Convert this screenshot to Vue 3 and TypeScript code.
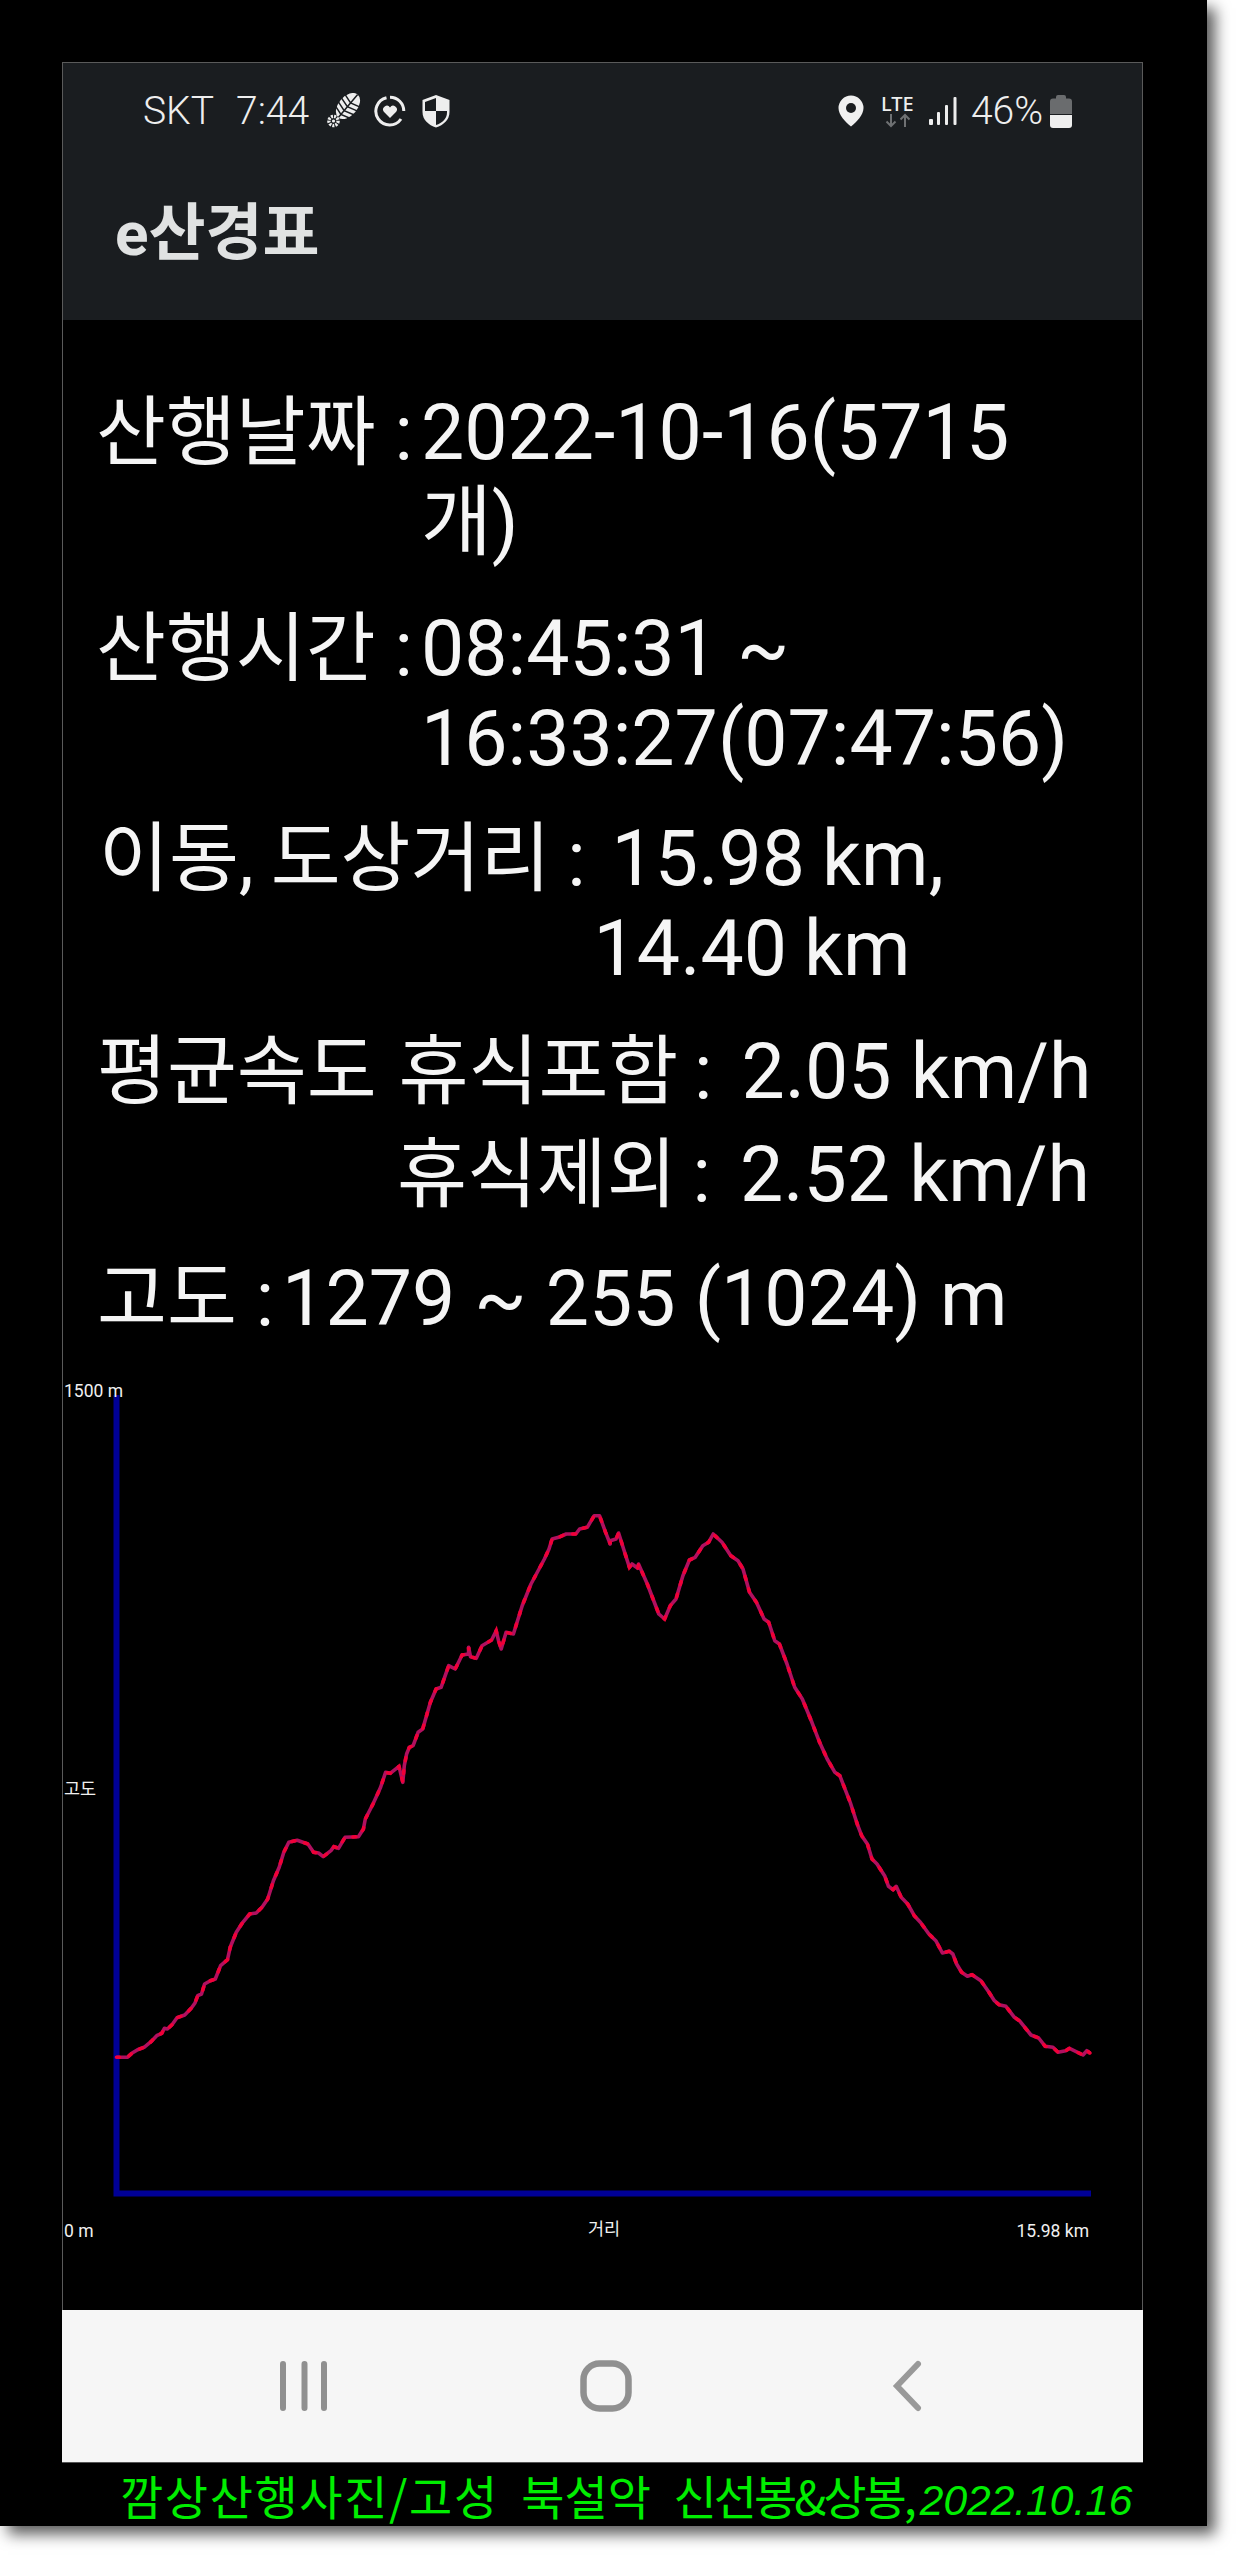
<script setup lang="ts">
type P = [number, number];
// readings in crop coordinates, converted to page coordinates
const conv = (pts: P[], ox: number, oy: number, sx: number): string =>
  pts.map(([x, y]) => `${(ox + x / sx).toFixed(1)},${(oy + y / 3).toFixed(1)}`).join(" ");

const a: P[] = [[200,775],[228,775],[240,763],[255,752],[272,745],[290,728],[305,710],[318,703],[325,688],[333,690],[345,677],[358,656],[378,648],[395,628],[405,612],[412,590],[422,585],[430,555],[445,545],[458,540],[472,500],[490,482],[497,445],[513,400],[530,370],[548,345],[565,342],[580,325],[595,300],[610,245],[625,205],[637,160],[650,130],[672,124],[700,135],[715,160],[728,162],[740,173],[760,155],[768,143],[780,148],[797,115],[832,113],[845,90]];
const b: P[] = [[850,1380],[870,1335],[890,1285],[903,1240],[915,1243],[938,1222],[948,1270],[952,1220],[958,1185],[965,1165],[975,1160],[988,1120],[1000,1110],[1020,1030],[1035,990],[1048,985],[1068,920],[1085,930],[1103,888],[1120,885],[1120,865],[1125,893],[1140,898],[1155,860],[1180,843],[1192,815],[1198,845],[1205,870],[1218,820],[1237,825],[1260,740],[1283,675],[1318,600],[1330,570],[1338,540],[1355,535],[1375,525],[1400,525],[1410,510],[1430,505],[1448,470],[1462,470],[1478,520],[1490,555],[1490,545],[1505,540],[1512,522],[1525,570],[1540,625]];
const c: P[] = [[345,255],[360,268],[362,255],[385,315],[415,405],[430,420],[445,380],[460,360],[478,290],[495,243],[510,235],[530,200],[545,190],[557,165],[580,190],[603,230],[622,245],[635,270],[652,340],[670,370],[690,420],[702,430],[718,485],[730,495],[750,555],[770,625],[790,660],[815,730],[835,790],[855,840],[875,880],[888,890],[915,970],[935,1040],[945,1070],[960,1095],[972,1140],[985,1155],[1005,1190]];
const d: P[] = [[645,262],[657,272],[665,262],[678,295],[695,315],[712,350],[728,370],[750,405],[768,425],[785,462],[803,457],[812,465],[822,495],[835,520],[850,532],[862,527],[885,545],[905,578],[920,605],[932,617],[950,622],[972,655],[985,665],[1015,708],[1035,717],[1052,742],[1072,745],[1085,760],[1105,755],[1115,748],[1150,768],[1160,755],[1168,762]];

const profile = [
  conv(a, 40, 1800, 2.613),
  conv(b, 40, 1360, 2.613),
  conv(c, 500, 1480, 2.613),
  conv(d, 640, 1800, 2.596),
].join(" ");
</script>

<template>
  <div class="page">
    <div class="frame">
      <div class="phone">
        <div class="screen">
          <header class="appbar">
            <div class="status">
              <span class="st-text skt">SKT</span>
              <span class="st-text clock">7:44</span>
              <svg class="ic shoe" width="36" height="36" viewBox="0 0 36 36">
                <g transform="rotate(40 22 13)">
                  <ellipse cx="22" cy="13" rx="9.500" ry="15" fill="#eee" />
                  <path d="M12 6l10 3l10-3M12 11l10 3l10-3M12 16l10 3l10-3M12 21l10 3l10-3M22 -2v30" stroke="#1a1d20" stroke-width="1.500" fill="none" />
                </g>
                <circle cx="7.500" cy="28" r="4.600" fill="none" stroke="#eee" stroke-width="3.400" stroke-dasharray="2 1.100" />
                <circle cx="7.500" cy="28" r="1.600" fill="#eee" />
              </svg>
              <svg class="ic ring" width="32" height="32" viewBox="0 0 32 32">
                <path d="M16 2.200a13.800 13.800 0 0 1 13.800 13.800M27 24a13.800 13.800 0 1 1-14.500-21.300" fill="none" stroke="#eee" stroke-width="3" />
                <path d="M16 23l-6.200-6.200a3.800 3.800 0 0 1 6.200-4.400a3.800 3.800 0 0 1 6.200 4.400z" fill="#eee" />
              </svg>
              <svg class="ic shield" width="28" height="34" viewBox="0 0 28 34">
                <path d="M14 1L27.500 6v12c0 8-6 13-13.500 15.500C6.500 31 .5 26 .5 18V6z" fill="#eee" />
                <path d="M14 4L3 8v9h11zM14 17h11v1.500c0 6-4.500 10.500-11 12.500z" fill="#1a1d20" />
              </svg>
              <span class="spacer"></span>
              <svg class="ic pin" width="26" height="32" viewBox="0 0 26 32">
                <path d="M13 .5a12.500 12.500 0 0 1 12.500 12.500c0 7-7 14-12.500 18.500C7.500 27 .5 20 .5 13A12.500 12.500 0 0 1 13 .5z" fill="#f0f0f0" />
                <circle cx="13" cy="13" r="5" fill="#1a1d20" />
              </svg>
              <div class="lte">
                <span class="lte-text">LTE</span>
                <svg class="ic" width="34" height="15" viewBox="0 0 34 15">
                  <path d="M10 1v12M5.500 8.500L10 13l4.500-4.500M24 14V2M19.500 6.500L24 2l4.500 4.500" fill="none" stroke="#6f7173" stroke-width="2" />
                </svg>
              </div>
              <svg class="ic signal" width="28" height="30" viewBox="0 0 28 30">
                <rect x="0" y="23" width="4" height="6" rx="1" fill="#eee" />
                <rect x="8" y="16" width="3" height="13" rx="1" fill="#eee" />
                <rect x="16" y="9" width="3" height="20" rx="1" fill="#eee" />
                <rect x="24.500" y="1" width="3" height="28" rx="1" fill="#eee" />
              </svg>
              <span class="st-text pct">46%</span>
              <svg class="ic battery" width="22" height="34" viewBox="0 0 22 34">
                <path d="M6 3a2 2 0 0 1 2-2h6a2 2 0 0 1 2 2v1.500h3a3 3 0 0 1 3 3V20H0V7.500a3 3 0 0 1 3-3h3z" fill="#6a6c6e" />
                <path d="M0 21h22v10a3 3 0 0 1-3 3H3a3 3 0 0 1-3-3z" fill="#eee" />
              </svg>
            </div>
            <div class="title">e산경표</div>
          </header>

          <main class="content">
            <div class="row r1">
              <span class="label">산행날짜 :</span>
              <span class="value v1">2022-10-16(5715<br />개)</span>
            </div>
            <div class="row r2">
              <span class="label">산행시간 :</span>
              <span class="value v1">08:45:31 ~<br />16:33:27(07:47:56)</span>
            </div>
            <div class="row r3">
              <span class="label l3">이동, 도상거리 :</span>
              <span class="value v3">
                <span class="v3a">15.98 km,</span>
                <span class="v3b">14.40 km</span>
              </span>
            </div>
            <div class="row r4">
              <span class="label l4">평균속도 </span>
              <span class="label l4b">휴식포함 :</span>
              <span class="value v4">2.05 km/h</span>
            </div>
            <div class="row r5">
              <span class="label l5">휴식제외 :</span>
              <span class="value v4">2.52 km/h</span>
            </div>
            <div class="row r6">
              <span class="label">고도 :</span>
              <span class="value v6">1279 ~ 255 (1024) m</span>
            </div>

            <svg class="chart" width="1079" height="965" viewBox="63 1345 1079 965">
              <path d="M116.500 1396V2194.500H1091" fill="none" stroke="#000096" stroke-width="6" />
              <polyline :points="profile" fill="none" stroke="#b0105f" stroke-width="3.600" stroke-linejoin="round" />
              <polyline :points="profile" fill="none" stroke="#f00038" stroke-width="3.600" stroke-linecap="round" stroke-dasharray="3 10" />
              <text x="64" y="1398" class="axis">1500 m</text>
              <text x="64" y="1796" class="axis">고도</text>
              <text x="64" y="2238" class="axis">0 m</text>
              <text x="588" y="2236" class="axis">거리</text>
              <text x="1089" y="2238" class="axis" text-anchor="end">15.98 km</text>
            </svg>
          </main>
        </div>

        <nav class="navbar">
          <svg width="48" height="50" viewBox="0 0 48 50">
            <path d="M3 3V47M24.500 3V47M44 3V47" fill="none" stroke="#909090" stroke-width="6" stroke-linecap="round" />
          </svg>
          <svg width="52" height="52" viewBox="0 0 52 52" class="nav-home">
            <rect x="3.500" y="3.500" width="45" height="45" rx="16" fill="none" stroke="#909090" stroke-width="6.500" />
          </svg>
          <svg width="30" height="52" viewBox="0 0 30 52" class="nav-back">
            <path d="M26 4L5 26L26 48" fill="none" stroke="#999" stroke-width="6" stroke-linecap="round" stroke-linejoin="miter" />
          </svg>
        </nav>
      </div>
      <div class="caption"><span class="c1">깜상산행사진/고성</span> 북설악 <span class="c3">신선봉&amp;상봉,</span><i>2022.10.16</i></div>
    </div>
  </div>
</template>

<style>
html, body { margin: 0; background: #fff; }
</style>

<style scoped>
.page {
  width: 1244px;
  height: 2564px;
  background: #fff;
  overflow: hidden;
}
.frame {
  width: 1207px;
  height: 2526px;
  background: #000;
  box-shadow: 8px 8px 14px rgba(0, 0, 0, 0.65);
  box-sizing: border-box;
  padding: 62px 0 0 62px;
}
.phone {
  width: 1081px;
  height: 2401px;
  display: flex;
  flex-direction: column;
}
.screen {
  height: 2248px;
  box-sizing: border-box;
  border: 1px solid #5a5a5a;
  border-bottom: 0;
  display: flex;
  flex-direction: column;
}
.appbar {
  height: 257px;
  flex: none;
  background: #1a1d20;
  display: flex;
  flex-direction: column;
}
.status {
  height: 96px;
  display: flex;
  align-items: center;
  padding-left: 80px;
  color: #eee;
}
.st-text {
  font-family: Roboto, sans-serif;
  font-weight: 300;
  font-size: 39px;
  line-height: 44px;
}
.clock { margin-left: 22px; }
.ic { display: block; flex: none; }
.shoe { margin-left: 17px; }
.ring { margin-left: 12px; }
.shield { margin-left: 16px; }
.spacer { flex: 1; }
.lte {
  margin-left: 17px;
  width: 36px;
  display: flex;
  flex-direction: column;
}
.lte-text {
  font-family: "Noto Sans", sans-serif;
  font-size: 20px;
  font-weight: 500;
  line-height: 19px;
  color: #eee;
}
.signal { margin-left: 12px; }
.pct { margin-left: 14px; }
.battery { margin-left: 7px; margin-right: 70px; }
.title {
  margin: 36px 0 0 52px;
  font-family: Roboto, "Noto Sans CJK KR", sans-serif;
  font-weight: 700;
  font-size: 62px;
  line-height: 78px;
  color: #e0e2e2;
}
.content {
  flex: 1;
  background: #000;
  color: #f5f5f5;
  display: flex;
  flex-direction: column;
  font-family: Roboto, "Noto Sans CJK KR", sans-serif;
  font-size: 76px;
  line-height: 90px;
  padding-top: 68px;
}
.row {
  display: flex;
  white-space: pre;
  padding-left: 33px;
}
.value { font-size: 77px; }
.r2 { margin-top: 36px; }
.r3 { margin-top: 30px; padding-left: 36px; word-spacing: -2px; }
.r4 { margin-top: 33px; padding-left: 34px; }
.r5 { margin-top: 13px; padding-left: 34px; }
.r6 { margin-top: 34px; padding-left: 34px; }
.v1 { margin-left: 8px; }
.v3 { display: flex; flex-direction: column; }
.v3a { margin-left: 26px; }
.v3b { margin-left: 8px; }
.l4 { margin-right: 3px; }
.l4b, .l5 { word-spacing: -3px; }
.l5 { margin-left: 300px; }
.v4 { margin-left: 29px; }
.v6 { margin-left: 8px; }
.chart {
  display: block;
  flex: none;
}
.axis {
  font-family: Roboto, "Noto Sans CJK KR", sans-serif;
  font-size: 17.500px;
  fill: #f0f0f0;
}
.navbar {
  height: 153px;
  flex: none;
  background: #f6f6f6;
  border-bottom: 1px solid #555;
  box-sizing: border-box;
  display: flex;
  align-items: center;
  padding-left: 218px;
}
.nav-home { margin-left: 252px; }
.nav-back { margin-left: 260px; }
.caption {
  margin: 3px 0 0 58px;
  font-family: "Noto Sans CJK KR", sans-serif;
  font-weight: 400;
  font-size: 47px;
  line-height: 58px;
  color: #00ee00;
  white-space: pre;
  word-spacing: 12px;
}
.c1 { letter-spacing: 1.600px; }
.c3 { letter-spacing: -3px; }
.caption i {
  font-family: "Liberation Sans", sans-serif;
  font-style: italic;
  font-size: 42.500px;
  margin-left: 6px;
}
</style>
